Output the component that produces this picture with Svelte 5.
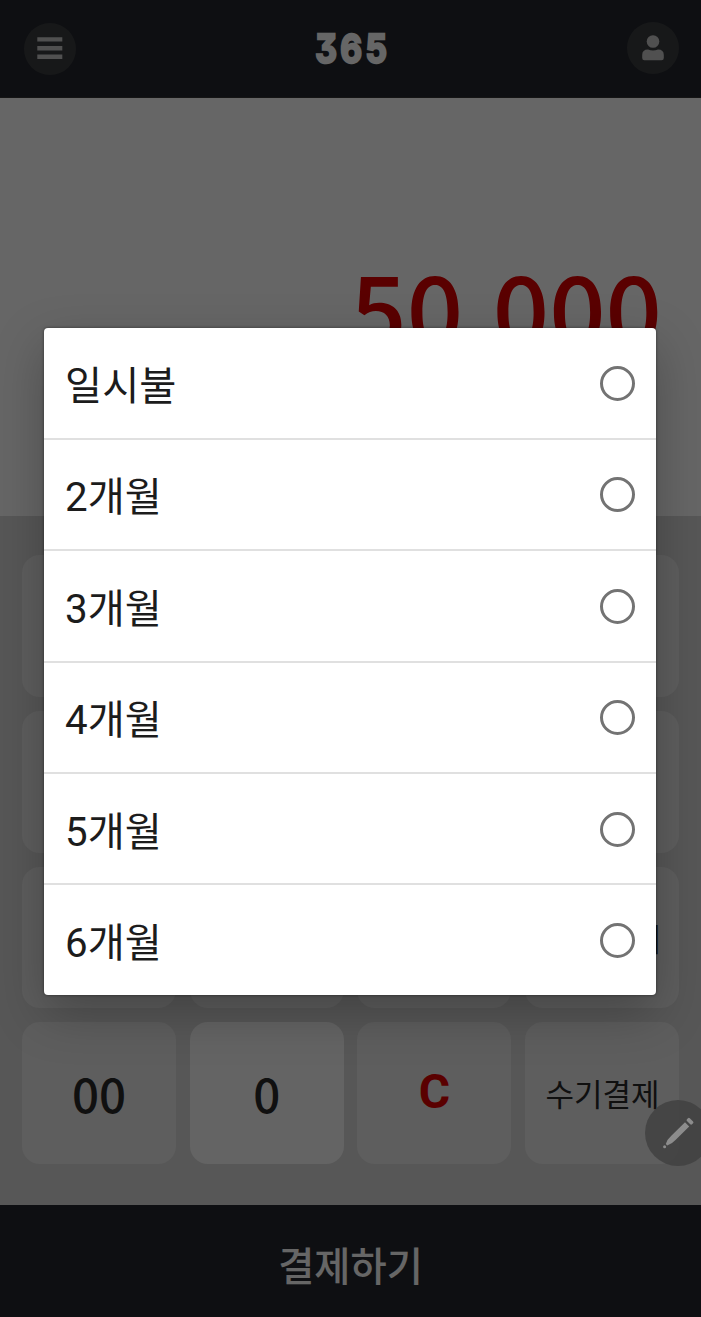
<script lang="ts">
    type Key = { label: string; kind: string };

    const keys: Key[] = [
        { label: "", kind: "number" },
        { label: "", kind: "number" },
        { label: "", kind: "number" },
        { label: "", kind: "menu" },
        { label: "", kind: "number" },
        { label: "", kind: "number" },
        { label: "", kind: "number" },
        { label: "", kind: "menu" },
        { label: "", kind: "number" },
        { label: "", kind: "number" },
        { label: "", kind: "number" },
        { label: "카드읽기", kind: "menu read" },
        { label: "00", kind: "number" },
        { label: "0", kind: "number zero" },
        { label: "C", kind: "clear" },
        { label: "수기결제", kind: "menu" },
    ];

    const options = ["일시불", "2개월", "3개월", "4개월", "5개월", "6개월"];

    let selected = $state("");
</script>

<div class="app">
    <header>
        <button class="round" aria-label="menu">
            <svg width="26" height="24" viewBox="0 0 26 24">
                <path d="M0.3 2.4H25.3M0.3 11.2H25.3M0.3 19.8H25.3" stroke="#c8c8c8" stroke-width="4.4" />
            </svg>
        </button>
        <div class="logo">365</div>
        <button class="round user" aria-label="user">
            <svg width="22" height="26" viewBox="0 0 22 26">
                <circle cx="11" cy="6.5" r="6.3" fill="#c8c8c8" />
                <path d="M0.2 23V20Q0.2 14.5 6 14.5Q11 16.3 16 14.5Q21.8 14.5 21.8 20V23Q21.8 25.3 19.5 25.3H2.5Q0.2 25.3 0.2 23Z" fill="#c8c8c8" />
            </svg>
        </button>
    </header>

    <section class="amount">50,000</section>

    <section class="keypad">
        {#each keys as key}
            <button class="key {key.kind}">{key.label}</button>
        {/each}
    </section>

    <button class="pay">결제하기</button>

    <div class="overlay">
        <div class="dialog" role="radiogroup">
            {#each options as option}
                <label class="option">
                    <span class="name">{option}</span>
                    <input type="radio" name="installment" value={option} bind:group={selected} />
                </label>
            {/each}
        </div>
    </div>

    <div class="pen">
        <svg width="32" height="32" viewBox="0 0 32 32" fill="#8c8c8c">
            <path d="M23 5.2L27.2 9.4L13.5 23.1Q10 27 5.2 28.5L3.8 27.1Q5 22.5 9.3 18.8Z" />
            <rect x="24.4" y="2.2" width="7.2" height="4" rx="1.3" transform="rotate(45 28 4.2)" />
            <circle cx="2.6" cy="29.7" r="1.5" />
        </svg>
    </div>
</div>

<style>
    :global(body) {
        margin: 0;
    }

    .app {
        position: relative;
        display: flex;
        flex-direction: column;
        width: 701px;
        height: 1317px;
        overflow: hidden;
        font-family: "Noto Sans CJK KR", sans-serif;
    }

    button {
        border: none;
        padding: 0;
        font-family: inherit;
    }

    header {
        display: flex;
        align-items: center;
        justify-content: space-between;
        box-sizing: border-box;
        height: 98px;
        padding: 0 22px 0 24px;
        background: #23262d;
        border-bottom: 1px solid #353535;
    }

    .round {
        display: flex;
        align-items: center;
        justify-content: center;
        width: 52px;
        height: 52px;
        border-radius: 50%;
        background: #3b3d40;
    }

    .user {
        margin-top: -1px;
    }

    .logo {
        font-family: Inter, sans-serif;
        font-feature-settings: "cv09";
        font-size: 40px;
        font-weight: 700;
        letter-spacing: 4px;
        line-height: 50px;
        color: #fff;
        -webkit-text-stroke: 2.5px #fff;
        stroke-linejoin: round;
        transform: scaleX(0.84);
        margin: 0 -3px 0 0;
    }

    .amount {
        box-sizing: border-box;
        height: 418px;
        padding: 132px 39px 0 0;
        text-align: right;
        font-size: 99px;
        line-height: 150px;
        font-weight: 500;
        color: #e10000;
        background: #fff;
    }

    .keypad {
        display: grid;
        grid-template-columns: repeat(4, 154px);
        grid-template-rows: repeat(4, 141.6px);
        gap: 14px 13.7px;
        box-sizing: border-box;
        height: 689px;
        padding: 39.4px 22px 0;
        background: #d9d9d9;
    }

    .key {
        border-radius: 18px;
        background: #ebebeb;
        color: #2a2a2a;
        font-size: 47.5px;
        font-weight: 500;
    }

    .zero {
        background: #fafafa;
    }

    .clear {
        padding-bottom: 2px;
        font-family: Roboto, sans-serif;
        font-size: 48px;
        font-weight: 700;
        color: #e10000;
    }

    .menu {
        padding-left: 1px;
        font-size: 31px;
        font-weight: 400;
        white-space: nowrap;
    }

    .read {
        padding-left: 5px;
    }

    .pay {
        flex: 1;
        background: #23262d;
        color: #fff;
        font-size: 39.3px;
        font-weight: 500;
        padding-top: 4px;
    }

    .overlay {
        position: absolute;
        inset: 0;
        display: flex;
        align-items: flex-start;
        justify-content: center;
        padding-top: 328.4px;
        background: rgba(0, 0, 0, 0.6);
    }

    .dialog {
        width: 612.6px;
        margin-right: 1px;
        border-radius: 4px;
        background: #fff;
        box-shadow: 0 18px 50px rgba(0, 0, 0, 0.26), 0 0 3px rgba(0, 0, 0, 0.5);
    }

    .option {
        display: flex;
        align-items: center;
        justify-content: space-between;
        box-sizing: border-box;
        height: 111.4px;
        padding: 1px 21.6px 0 21.4px;
        border-bottom: 2px solid #e0e0e0;
    }

    .option:last-child {
        height: 109.6px;
        border-bottom: none;
    }

    .name {
        margin-top: -2px;
        font-family: Roboto, "Noto Sans CJK KR", sans-serif;
        font-size: 40.3px;
        color: #1c1c1c;
    }

    input {
        appearance: none;
        box-sizing: border-box;
        width: 35px;
        height: 35px;
        margin: 0;
        border: 3px solid #737373;
        border-radius: 50%;
    }

    input:checked {
        border-width: 10px;
    }

    .pen {
        position: absolute;
        left: 645px;
        top: 1100px;
        display: flex;
        align-items: center;
        justify-content: center;
        width: 66px;
        height: 66px;
        border-radius: 50%;
        background: rgba(65, 65, 65, 0.85);
    }
</style>
